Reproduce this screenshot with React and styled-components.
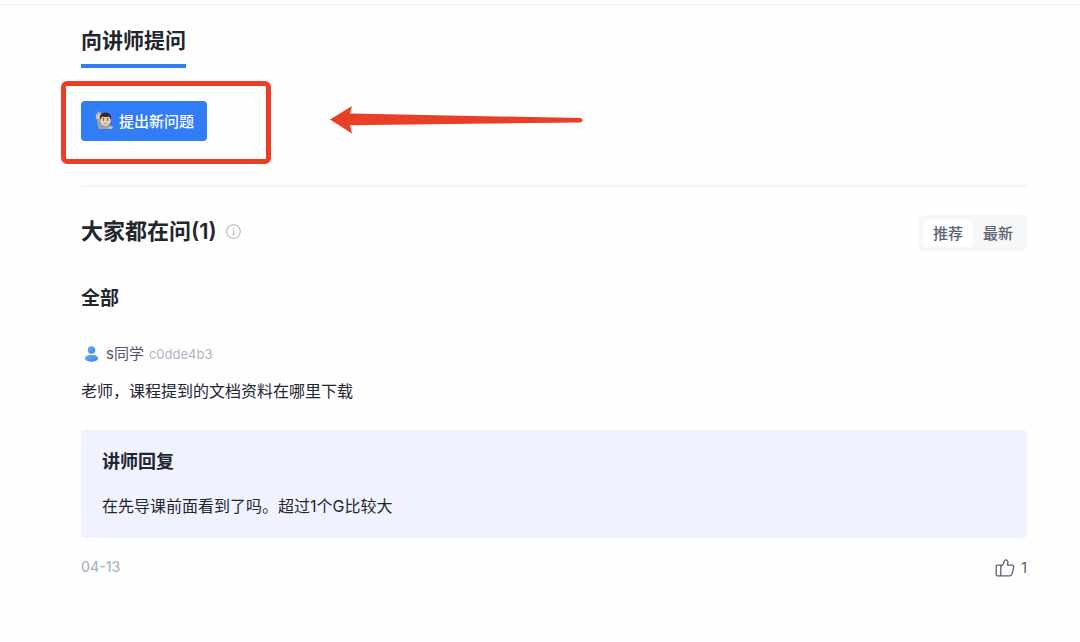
import React, { useState } from 'react';
import styled, { createGlobalStyle } from 'styled-components';

const GlobalStyle = createGlobalStyle`
  *, *::before, *::after { box-sizing: border-box; }

  body {
    margin: 0;
    background: #FEFEFE;
    color: #22262F;
    font-family: Inter, 'Noto Sans CJK SC', sans-serif;
  }

  h2, h3, h4, p { margin: 0; }
  button { font-family: inherit; cursor: pointer; }
`;

// ─── Page ─────────────────────────────────────────────────────────────────────
const Page = styled.main`
  margin-top: 4px;
  padding: 22px 53px 32px 81px;
  border-top: 2px solid #F4F4F6;
`;

// ─── Ask section ──────────────────────────────────────────────────────────────
const AskSection = styled.section`
  position: relative;
  display: flex;
  flex-direction: column;
  align-items: flex-start;
  padding-bottom: 44px;
  border-bottom: 2px solid #F4F4F6;
`;

const AskTitle = styled.h2`
  padding-bottom: 10px;
  margin-bottom: 33px;
  border-bottom: 4px solid #327DF5;
  font-size: 21px;
  font-weight: 600;
  line-height: 26px;
`;

const AskButton = styled.button`
  display: flex;
  align-items: center;
  gap: 5px;
  height: 40px;
  padding: 0 13px 2px 14px;
  border: 0;
  border-radius: 4px;
  background: #327DF5;
  color: #FFFFFF;
  font-size: 15px;
  font-weight: 500;
`;

// ─── Annotation ───────────────────────────────────────────────────────────────
const Highlight = styled.div`
  position: absolute;
  top: 53px;
  left: -20px;
  width: 210px;
  height: 83px;
  border: 5px solid #E83F26;
  border-radius: 6px;
  pointer-events: none;
`;

const Arrow = styled.svg`
  position: absolute;
  top: 77px;
  left: 248px;
  width: 256px;
  height: 30px;
  pointer-events: none;
`;

// ─── Question list ────────────────────────────────────────────────────────────
const ListHeader = styled.header`
  display: flex;
  align-items: flex-start;
  justify-content: space-between;
  padding-top: 28px;
`;

const ListTitle = styled.h2`
  display: flex;
  align-items: center;
  gap: 9px;
  font-size: 22px;
  font-weight: 600;
  line-height: 32px;
`;

const Tabs = styled.div`
  display: flex;
  padding: 4px;
  border-radius: 6px;
  background: #F6F7F9;
`;

const Tab = styled.button`
  height: 28px;
  padding: 0 10px 2px;
  border: 0;
  border-radius: 4px;
  background: ${({ $active }) => ($active ? '#FFFFFF' : 'transparent')};
  color: #5B6272;
  font-size: 15px;
  font-weight: 500;
`;

const GroupTitle = styled.h3`
  margin-top: 34px;
  font-size: 19px;
  font-weight: 600;
  line-height: 28px;
`;

const Author = styled.div`
  display: flex;
  align-items: center;
  gap: 5px;
  margin-top: 29px;
  padding-left: 3px;
  line-height: 24px;
`;

const AuthorIcon = styled.svg`
  margin-right: 2px;
`;

const AuthorName = styled.span`
  color: #4E5668;
  font-size: 15px;
`;

const AuthorId = styled.span`
  color: #AEB4C3;
  font-size: 13px;
`;

const Question = styled.p`
  margin-top: 13px;
  font-size: 16px;
  line-height: 24px;
`;

const Reply = styled.div`
  margin-top: 27px;
  padding: 20px 21px;
  border-radius: 4px;
  background: #F0F3FF;
`;

const ReplyTitle = styled.h4`
  font-size: 18px;
  font-weight: 600;
  line-height: 24px;
`;

const ReplyText = styled.p`
  margin-top: 20px;
  font-size: 16px;
  line-height: 24px;
`;

const Footer = styled.footer`
  display: flex;
  align-items: flex-start;
  justify-content: space-between;
  margin-top: 18px;
`;

const PostedAt = styled.time`
  color: #AEB4C3;
  font-size: 14px;
  font-weight: 500;
  line-height: 21px;
`;

const LikeButton = styled.button`
  display: flex;
  align-items: center;
  gap: 6px;
  padding: 0;
  border: 0;
  background: none;
  color: #5B6272;
  font-size: 15px;
  line-height: 24px;
`;

// ─── Icons ────────────────────────────────────────────────────────────────────
const RaisedHand = () => (
  <svg width="19" height="20" viewBox="0 0 19 20" aria-hidden="true">
    <path d="M1.500 8h3.300L7.500 14 7 19H3.500Z" fill="#9AA3AA" />
    <path d="M4 19c.5-3 3-4 6.500-4s6 1 6.500 4Z" fill="#9AA3AA" />
    <path d="m1.500 9-.9-5 1-.2.8 1.500L2.700 1.500l1 .1.300 2.900L5 2l.9.4-.4 3.300L4.600 9Z" fill="#E5BFA0" />
    <ellipse cx="10.500" cy="10" rx="5.300" ry="6" fill="#F1CFB2" />
    <path d="M5 9.500C4.500 4.500 7 2.500 10.500 2.500S16.700 4.500 16 9.500c-1-.8-1.500-2-1.800-3-2 .8-5.500.8-7.200 0-.3 1-1 2.500-2 3Z" fill="#302B2C" />
    <path d="M7.500 8.600h1.800M11.700 8.600h1.800" stroke="#4C3A33" strokeWidth=".8" />
    <circle cx="8.500" cy="10" r=".7" fill="#332B29" />
    <circle cx="12.500" cy="10" r=".7" fill="#332B29" />
    <path d="M8.800 13c1 .8 2.400.8 3.400 0" fill="none" stroke="#B96A5B" strokeWidth=".9" />
    <path d="M13.500 18.500c0-2 1.500-2.500 4-2.300l.5 1.600c-1.500 1-3 1.200-4.500.7Z" fill="#E5BFA0" />
  </svg>
);

const InfoIcon = () => (
  <svg width="15" height="15" viewBox="0 0 15 15" fill="none" stroke="#B6BAC2" aria-hidden="true">
    <circle cx="7.500" cy="7.500" r="6.800" strokeWidth="1.100" />
    <path d="M6.500 6.500h1.100v4M6.200 10.700h2.800" />
    <circle cx="7.500" cy="4.300" r=".8" fill="#B6BAC2" stroke="none" />
  </svg>
);

const ThumbIcon = () => (
  <svg width="20" height="18" viewBox="0 0 20 18" fill="none" stroke="currentColor" strokeWidth="1.300" strokeLinejoin="round" aria-hidden="true">
    <path d="M2.200 6.200h3.600v10.600H2.200a1 1 0 0 1-1-1V7.200a1 1 0 0 1 1-1Z" />
    <path d="M5.800 7.200C8.300 6 9 4.200 9.300 2.200 9.500 1 10.500.8 11.300 1c1.500.5 1.800 1.800 1.500 3.200l-.4 2H17c1.200 0 2 1 1.700 2.100l-1.600 6.600c-.3 1.200-1.100 1.900-2.300 1.900H5.800" />
  </svg>
);

const TABS = ['推荐', '最新'];

// ─── Component ────────────────────────────────────────────────────────────────
export default function App() {
  const [tab, setTab] = useState('推荐');

  return (
    <>
      <GlobalStyle />
      <Page>
        <AskSection>
          <AskTitle>向讲师提问</AskTitle>
          <AskButton type="button">
            <RaisedHand />
            提出新问题
          </AskButton>
          <Highlight />
          <Arrow viewBox="0 0 256 30" aria-hidden="true">
            <path
              d="M1 14.500 23 1l-2 7.500L251 13q2.500 0 2.500 2.200T251 17.500L21 20.200l2 8.300Z"
              fill="#E83F26"
            />
          </Arrow>
        </AskSection>

        <section>
          <ListHeader>
            <ListTitle>
              大家都在问(1)
              <InfoIcon />
            </ListTitle>
            <Tabs>
              {TABS.map((name) => (
                <Tab key={name} type="button" $active={tab === name} onClick={() => setTab(name)}>
                  {name}
                </Tab>
              ))}
            </Tabs>
          </ListHeader>

          <GroupTitle>全部</GroupTitle>

          <article>
            <Author>
              <AuthorIcon width="15" height="16" viewBox="0 0 15 16" aria-hidden="true">
                <defs>
                  <linearGradient id="user" x1="0" y1="0" x2="1" y2="1">
                    <stop offset="0" stopColor="#6BB1F5" />
                    <stop offset="1" stopColor="#3485EA" />
                  </linearGradient>
                </defs>
                <circle cx="7.500" cy="4" r="3.800" fill="url(#user)" />
                <ellipse cx="7.500" cy="12.300" rx="6.600" ry="3.500" fill="url(#user)" />
              </AuthorIcon>
              <AuthorName>s同学</AuthorName>
              <AuthorId>c0dde4b3</AuthorId>
            </Author>
            <Question>老师，课程提到的文档资料在哪里下载</Question>
            <Reply>
              <ReplyTitle>讲师回复</ReplyTitle>
              <ReplyText>在先导课前面看到了吗。超过1个G比较大</ReplyText>
            </Reply>
            <Footer>
              <PostedAt>04-13</PostedAt>
              <LikeButton type="button" aria-label="点赞 1">
                <ThumbIcon />
                1
              </LikeButton>
            </Footer>
          </article>
        </section>
      </Page>
    </>
  );
}
